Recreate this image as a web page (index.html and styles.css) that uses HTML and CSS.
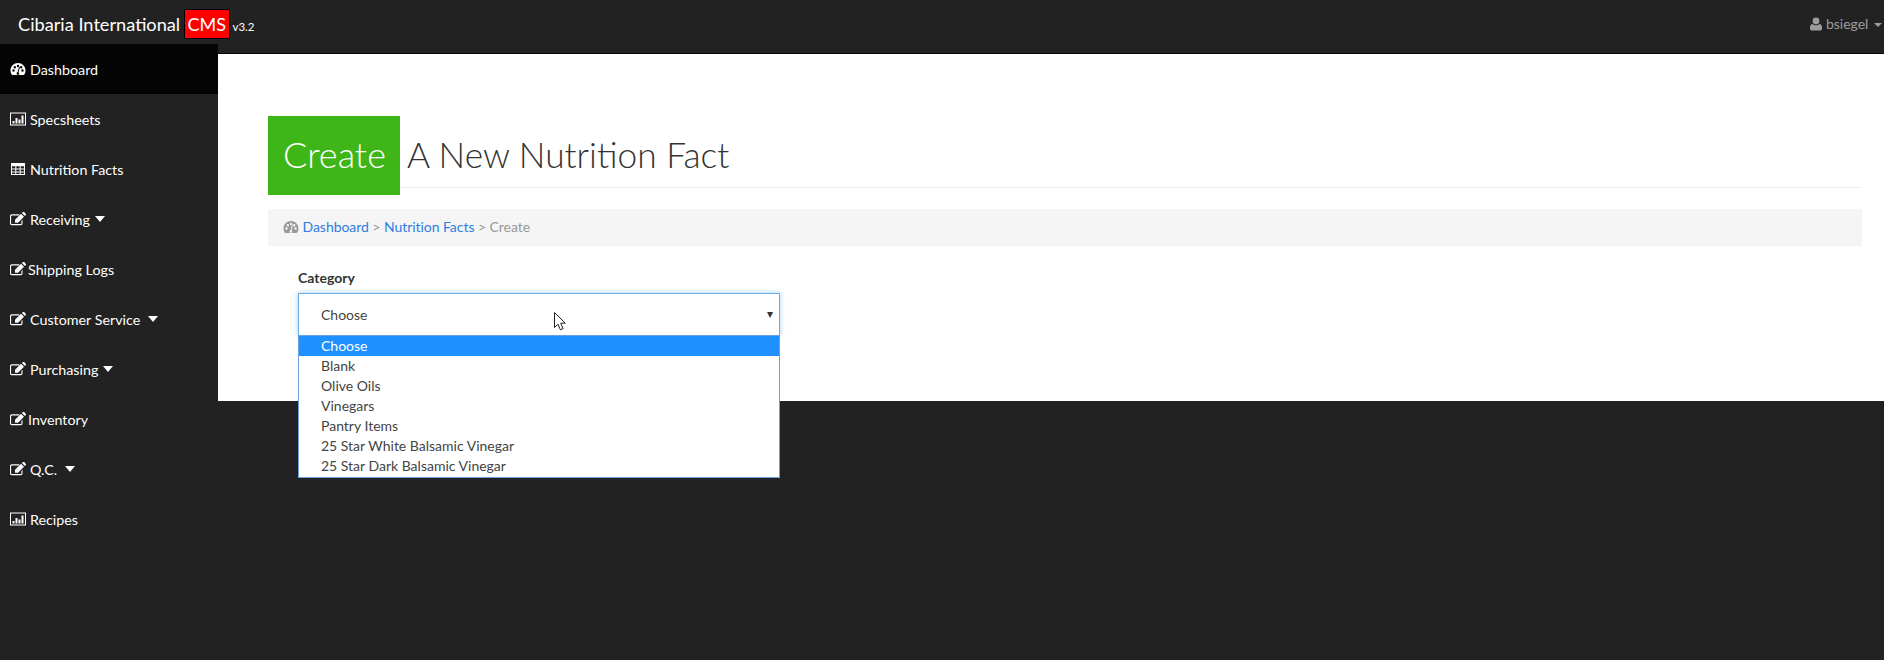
FILE: index.html
```html
<!DOCTYPE html>
<html lang="en">
<head>
<meta charset="utf-8">
<title>Create Nutrition Fact</title>
<link rel="stylesheet" href="styles.css">
</head>
<body>
<svg class="defs" width="0" height="0" aria-hidden="true">
  <symbol id="i-dash" viewBox="0 0 16 14"><path fill-rule="evenodd" d="M8 1C3.800 1 .5 4.300 .5 8.500c0 1.500.4 2.900 1.200 4.100.2.200.4.400.7.400h11.200c.3 0 .5-.2.7-.4.8-1.200 1.200-2.600 1.200-4.100C15.500 4.300 12.200 1 8 1ZM3.500 9.700a1.200 1.200 0 1 1 0-2.400 1.200 1.200 0 0 1 0 2.400Zm1.300-3.300a1.200 1.200 0 1 1 0-2.400 1.200 1.200 0 0 1 0 2.400Zm3.200-1.300a1.200 1.200 0 1 1 0-2.400 1.200 1.200 0 0 1 0 2.400Zm1.400 6.300c0 .8-.6 1.400-1.400 1.400s-1.400-.6-1.400-1.400c0-.7.500-1.300 1.100-1.400L8.900 5.200c.1-.3.400-.4.600-.3.300.1.400.4.300.6L8.600 10.500c.2.100.3.100.3.900ZM11.200 6.400a1.200 1.200 0 1 1 0-2.400 1.200 1.200 0 0 1 0 2.400Zm1.300 3.300a1.200 1.200 0 1 1 0-2.400 1.200 1.200 0 0 1 0 2.400Z"/></symbol>
  <symbol id="i-chart" viewBox="0 0 16 14"><path fill-rule="evenodd" d="M0 .500h16v13H0ZM1 1.500v11h14v-11Z"/><path d="M2.500 9h2v2.500h-2ZM5.500 6h2v5.500h-2ZM8.500 7.500h2v4h-2ZM11.500 3.500h2v8h-2Z"/></symbol>
  <symbol id="i-table" viewBox="0 0 16 14"><path fill-rule="evenodd" d="M1 1h14v12H1ZM2 4.300v2.200h3.300V4.300Zm4.300 0v2.200h3.400V4.300Zm4.400 0v2.200H14V4.300ZM2 7.500v2h3.300v-2Zm4.300 0v2h3.400v-2Zm4.400 0v2H14v-2ZM2 10.500V12h3.300v-1.500Zm4.300 0V12h3.400v-1.500Zm4.400 0V12H14v-1.500Z"/></symbol>
  <symbol id="i-edit" viewBox="0 0 16 14"><path d="M12.500 7.800v3.700c0 1-.8 1.700-1.700 1.700H1.800C.8 13.200 0 12.500 0 11.500V4C0 3 .8 2.300 1.800 2.300h7.400v1.100H2c-.5 0-.9.400-.9.900v6.900c0 .5.400.9.900.9h8.500c.5 0 .9-.4.900-.9V8.900Z"/><path d="M5 7.800v3h3l6-6-3-3ZM11.900 1l3 3 .9-.9c.3-.3.300-.7 0-1L14.200.1c-.3-.2-.7-.2-1 0Z"/></symbol>
  <symbol id="i-user" viewBox="0 0 12 14"><path d="M6 .5a3.400 3.400 0 0 1 3.400 3.400A3.400 3.400 0 0 1 6 7.300 3.400 3.400 0 0 1 2.600 3.900 3.400 3.400 0 0 1 6 .5ZM2.500 7c.9.900 2.100 1.300 3.500 1.300S8.600 7.900 9.500 7c1.500.1 2.500 1.300 2.500 3.400v1.400c0 .9-.7 1.700-1.700 1.700H1.700C.7 13.500 0 12.700 0 11.800v-1.400C0 8.300 1 7.100 2.500 7Z"/></symbol>
</svg>

<header class="topbar">
  <a class="brand" href="#">Cibaria International <span class="brand-badge">CMS</span> <small class="brand-version">v3.2</small></a>
  <a class="user" href="#"><svg class="user-icon"><use href="#i-user"/></svg> bsiegel <span class="caret caret-dim"></span></a>
</header>

<div class="shell">
  <nav class="sidebar">
    <a class="nav-item active" href="#"><svg class="ico"><use href="#i-dash"/></svg><span class="gap">Dashboard</span></a>
    <a class="nav-item" href="#"><svg class="ico"><use href="#i-chart"/></svg><span class="gap">Specsheets</span></a>
    <a class="nav-item" href="#"><svg class="ico"><use href="#i-table"/></svg><span class="gap">Nutrition Facts</span></a>
    <a class="nav-item" href="#"><svg class="ico"><use href="#i-edit"/></svg><span class="gap">Receiving</span><span class="caret"></span></a>
    <a class="nav-item" href="#"><svg class="ico"><use href="#i-edit"/></svg><span class="tight">Shipping Logs</span></a>
    <a class="nav-item" href="#"><svg class="ico"><use href="#i-edit"/></svg><span class="gap">Customer Service</span><span class="caret caret-wide"></span></a>
    <a class="nav-item" href="#"><svg class="ico"><use href="#i-edit"/></svg><span class="gap">Purchasing</span><span class="caret"></span></a>
    <a class="nav-item" href="#"><svg class="ico"><use href="#i-edit"/></svg><span class="tight">Inventory</span></a>
    <a class="nav-item" href="#"><svg class="ico"><use href="#i-edit"/></svg><span class="gap">Q.C.</span><span class="caret caret-wide"></span></a>
    <a class="nav-item" href="#"><svg class="ico"><use href="#i-chart"/></svg><span class="gap">Recipes</span></a>
  </nav>

  <main class="content">
    <h1 class="page-title"><span class="title-tag">Create</span><span class="title-rest">A New Nutrition Fact</span></h1>
    <div class="crumbs">
      <svg class="crumb-ico"><use href="#i-dash"/></svg>
      <a href="#">Dashboard</a> &gt; <a href="#">Nutrition Facts</a> &gt; Create
    </div>
    <form class="form">
      <label class="field-label">Category</label>
      <div class="select-wrap">
        <div class="select-box"><span>Choose</span><span class="select-arrow">▾</span></div>
        <ul class="options">
          <li class="option selected">Choose</li>
          <li class="option">Blank</li>
          <li class="option">Olive Oils</li>
          <li class="option">Vinegars</li>
          <li class="option">Pantry Items</li>
          <li class="option">25 Star White Balsamic Vinegar</li>
          <li class="option">25 Star Dark Balsamic Vinegar</li>
        </ul>
        <svg class="pointer" viewBox="0 0 13 20" width="13" height="20"><path d="M.5.500V15.500L4 12.200l2.400 5.600 2.700-1.200L6.700 11.200H11.300Z" fill="#fff" stroke="#222" stroke-width="1"/></svg>
      </div>
    </form>
  </main>
</div>
</body>
</html>
```
FILE: styles.css
```css
* { box-sizing: border-box; }
html, body { margin: 0; height: 100%; }
body {
  background: #222;
  font-family: "Lato", "Noto Sans", sans-serif;
  font-size: 14px;
  color: #333;
  overflow: hidden;
}
a { text-decoration: none; }
.defs { position: absolute; }

.topbar {
  height: 54px;
  padding: 0 2px 0 18px;
  display: flex;
  justify-content: space-between;
  align-items: flex-start;
  background: #222;
  border-bottom: 1px solid #080808;
}
.brand { color: #fff; font-size: 18.2px; line-height: 48px; white-space: nowrap; }
.brand-badge {
  display: inline-block;
  margin-left: -1px;
  height: 30px;
  width: 46px;
  line-height: 28px;
  font-size: 18px;
  text-align: center;
  background: #f00;
  border: 1px solid #000;
  color: #fff;
  vertical-align: 0;
}
.brand-version { font-size: 11.5px; margin-left: -2px; }
.user { color: #9d9d9d; line-height: 48px; font-size: 14px; }
.user-icon { width: 12px; height: 14px; fill: #9d9d9d; vertical-align: -2px; }

.shell { display: flex; align-items: flex-start; }
.sidebar { width: 218px; margin-top: -10px; flex: none; position: relative; z-index: 1; font-size: 14.3px; }
.nav-item {
  display: flex;
  align-items: center;
  height: 50px;
  padding-left: 10px;
  color: #fff;
  white-space: nowrap;
}
.nav-item.active { background: #040404; }
.ico { width: 16px; height: 14px; fill: #fff; flex: none; }
.gap { margin-left: 4px; }
.tight { margin-left: 2px; }
.caret {
  display: inline-block;
  margin-left: 5px;
  border-top: 6px solid #fff;
  border-left: 5px solid transparent;
  border-right: 5px solid transparent;
}
.caret-wide { margin-left: 8px; }
.caret-dim { border-top-color: #9d9d9d; border-top-width: 4px; border-left-width: 4px; border-right-width: 4px; margin-left: 2px; vertical-align: middle; }

.content {
  flex: 1;
  height: 347px;
  background: #fff;
  padding: 62px 22px 0 50px;
}
.page-title {
  margin: 0;
  height: 79px;
  display: flex;
  align-items: stretch;
  font-weight: 300;
  font-size: 36px;
  color: #333;
  position: relative;
}
.page-title::after {
  content: "";
  position: absolute;
  left: 0; right: 0;
  top: 71px;
  border-bottom: 1px solid #eee;
}
.title-tag {
  background: #3fb618;
  color: #fff;
  width: 132px;
  padding: 16px 0 0 15px;
  line-height: 44px;
  position: relative;
  z-index: 1;
}
.title-rest { margin-left: 7px; padding-top: 17px; line-height: 44px; white-space: nowrap; font-size: 35.3px; }

.crumbs {
  margin-top: 14px;
  height: 37px;
  line-height: 36px;
  padding-left: 15px;
  background: #f5f5f5;
  color: #999;
  letter-spacing: -.05px;
}
.crumbs a { color: #2f7de1; }
.crumb-ico { width: 16px; height: 14px; fill: #999; vertical-align: -2px; }

.form { padding: 22px 0 0 30px; }
.field-label { display: block; font-weight: 700; line-height: 20px; margin-bottom: 5px; color: #333; }
.select-wrap { width: 482px; position: relative; }
.select-box {
  height: 43px;
  padding: 0 5px 0 22px;
  display: flex;
  justify-content: space-between;
  align-items: center;
  border: 1px solid #66afe9;
  background: #fff;
  box-shadow: 0 0 5px rgba(102,175,233,.6);
  color: #444;
}
.select-arrow { font-size: 12px; color: #333; margin-top: -3px; margin-right: 1px; }
.options {
  list-style: none;
  margin: 0;
  padding: 0;
  position: absolute;
  left: 0; right: 0;
  top: 42px;
  background: #fff;
  border: 1px solid #6a9fe0;
  z-index: 2;
  height: 143px;
  overflow: hidden;
}
.option { height: 20px; line-height: 20px; padding-left: 22px; color: #444; }
.option.selected { background: #1e90ff; color: #fff; }
.pointer { position: absolute; left: 256px; top: 19px; z-index: 3; }
```
